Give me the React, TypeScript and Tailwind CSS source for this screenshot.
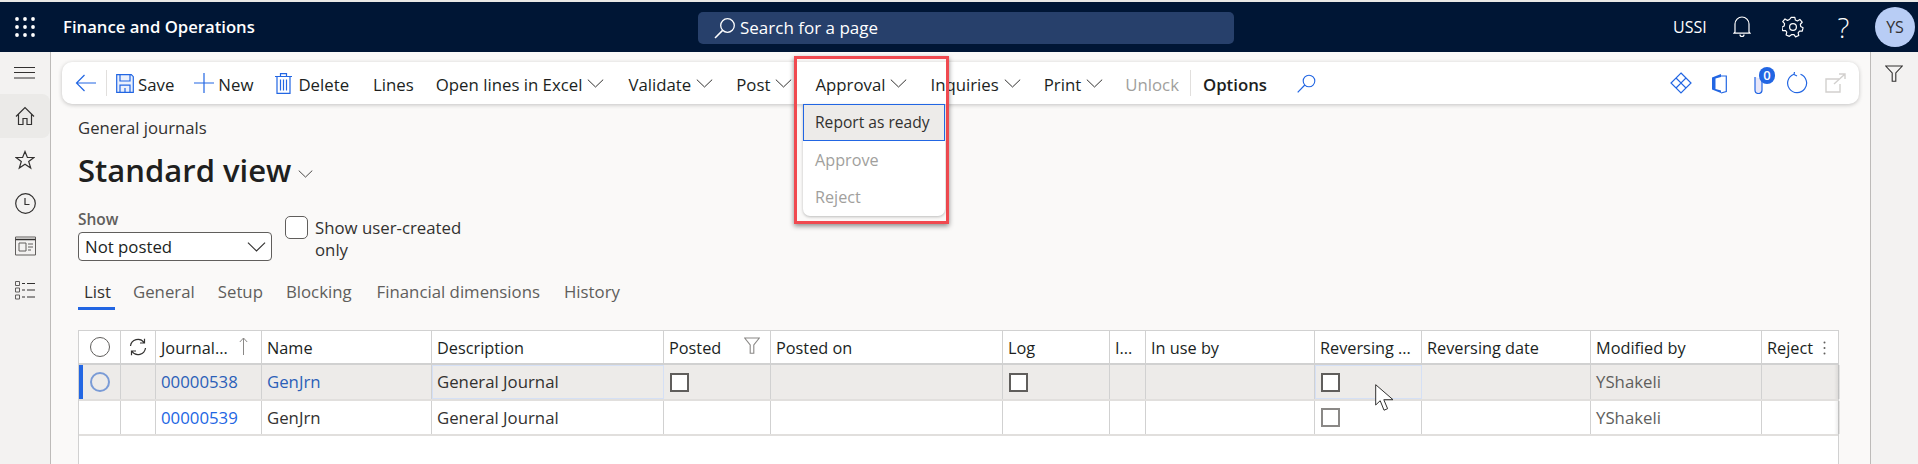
import React from "react";

const BLUE = "#2266e3";
const font = { fontFamily: '"Open Sans", "Noto Sans", sans-serif' };

const Chevron = ({ className = "ml-[5px] w-[17px] h-[9px] -mt-[2px]", color = "#323130" }: { className?: string; color?: string }) => (
  <svg viewBox="0 0 17 9" className={className} fill="none" stroke={color} strokeWidth="1">
    <path d="M.8.6 8.5 8 16.2.6" />
  </svg>
);

const ToolItem = ({ label, ml, chevron, className = "text-[#201f1e]" }: { label: string; ml: string; chevron?: boolean; className?: string }) => (
  <div className={`flex items-center shrink-0 pt-[3px] ${ml} ${className}`}>
    <span className="whitespace-nowrap">{label}</span>
    {chevron && <Chevron />}
  </div>
);

const Icon = ({ children, w, h, cls, vb }: { children: React.ReactNode; w: number; h: number; cls: string; vb?: string }) => (
  <svg width={w} height={h} viewBox={vb ?? `0 0 ${w} ${h}`} fill="none" className={cls}>
    {children}
  </svg>
);

const Check = ({ dim }: { dim?: boolean }) => (
  <div className={`ml-[1px] w-[19px] h-[19px] border-2 bg-white ${dim ? "border-[#8a8886]" : "border-[#605e5c]"}`} />
);

const headers = ["", "", "Journal...", "Name", "Description", "Posted", "Posted on", "Log", "I...", "In use by", "Reversing ...", "Reversing date", "Modified by", "Reject"];
const GRID = "grid grid-cols-[42px_35px_106px_170px_232px_107px_232px_107px_36px_169px_107px_169px_171px_78px]";

const Cell = ({ children, className = "" }: { children?: React.ReactNode; className?: string }) => (
  <div className={`relative flex items-center pl-[5px] border-r border-[#d1d1d1] last:border-r-0 whitespace-nowrap overflow-hidden ${className}`}>{children}</div>
);

const Row = ({ selected, link2, dim }: { selected?: boolean; link2?: boolean; dim?: boolean }) => (
  <div className={`${GRID} border-b-2 border-[#e1dfdd] ${selected ? "h-[36px] bg-[#edebe9]" : "h-[35px] bg-white"}`}>
    <Cell className="justify-center !pl-0">
      {selected && <div className="absolute left-0 top-0 bottom-0 w-[4px] bg-[#2266e3]" />}
      {selected && <div className="w-[20px] h-[20px] rounded-full border-2 border-[#7a9bd6]" />}
    </Cell>
    <Cell />
    <Cell className={selected ? "text-[#2b5fb8]" : "text-[#2266e3]"}>{selected ? "00000538" : "00000539"}</Cell>
    <Cell className={link2 ? "text-[#2b5fb8]" : "text-[#323130]"}>GenJrn</Cell>
    <Cell className={`text-[#323130] ${selected ? "outline outline-1 -outline-offset-1 outline-[#d5e0f5]" : ""}`}>General Journal</Cell>
    <Cell>{selected && <Check />}</Cell>
    <Cell />
    <Cell>{selected && <Check />}</Cell>
    <Cell />
    <Cell />
    <Cell className={selected ? "outline outline-1 -outline-offset-1 outline-[#d5e0f5]" : ""}><Check dim={dim} /></Cell>
    <Cell />
    <Cell className="text-[#605e5c]">YShakeli</Cell>
    <Cell>
      <div className="absolute right-0 top-0 bottom-0 w-[6px] bg-gradient-to-l from-black/10 to-transparent" />
    </Cell>
  </div>
);

export default function App() {
  return (
    <div className="w-[1918px] h-[464px] overflow-hidden relative flex flex-col bg-[#faf9f8] text-[16.8px] text-[#201f1e]" style={font}>
      <div className="h-[2px] bg-[#e8e8e6] shrink-0" />
      {/* Header */}
      <header className="h-[50px] shrink-0 bg-[#001635] flex items-center text-white">
        <Icon w={20} h={20} cls="ml-[15px] shrink-0">
          {[2, 10, 18].flatMap((y) => [2, 10, 18].map((x) => <circle key={`${x}${y}`} cx={x} cy={y} r="1.9" fill="#fff" />))}
        </Icon>
        <span className="ml-[28px] w-[192px] font-semibold text-[16.7px] whitespace-nowrap">Finance and Operations</span>
        <div className="ml-[443px] w-[536px] h-[32px] bg-[#27406b] rounded-[5px] mt-[2px] flex items-center">
          <Icon w={22} h={22} cls="ml-[16px] shrink-0">
            <circle cx="13.5" cy="8.5" r="6.8" stroke="#fff" strokeWidth="1.3" />
            <path d="M8.6 13.4 1 21" stroke="#fff" strokeWidth="1.5" />
          </Icon>
          <span className="ml-[4px] text-[#fff] text-[17px]">Search for a page</span>
        </div>
        <span className="ml-[439px] text-[16px] w-[35px]">USSI</span>
        <Icon w={18} h={22} cls="ml-[25px]">
          <path d="M2 16V8a7 7 0 0 1 14 0v8l1 1.2H1L2 16ZM7 18.5a2 2 0 0 0 4 0" stroke="#fff" strokeWidth="1.2" />
        </Icon>
        <Icon w={22} h={22} cls="ml-[31px]" vb="0 0 24 24">
          <path d="M10 2h4l.6 3 2.2 1 2.7-1.6 2.5 3-2 2.2.4 2.4 2.6 1.4-.9 3.7-3-.1-1.5 1.9.7 3-3.5 1.5-1.7-2.5h-2.4L8 22.8l-3.5-1.5.7-3-1.5-1.9-3 .1-.9-3.7L2.4 11.4l.4-2.4-2-2.2 2.5-3L6 5.4l2.2-1z" transform="translate(0 -.6)" stroke="#fff" strokeWidth="1.3" strokeLinejoin="round" />
          <circle cx="12" cy="12" r="3.7" stroke="#fff" strokeWidth="1.3" />
        </Icon>
        <span className="ml-[32px] text-[28px] font-light leading-none w-[15px] text-center">?</span>
        <div className="ml-[24px] w-[40px] h-[40px] rounded-full bg-[#b8cdf5] text-[#323130] text-[16px] flex items-center justify-center">YS</div>
      </header>

      <div className="flex flex-1 min-h-0">
        {/* Left nav */}
        <nav className="w-[51px] shrink-0 bg-[#f3f2f1] border-r border-[#bdbbb9] flex flex-col">
          <Icon w={22} h={12} cls="ml-[14px] mt-[15px] shrink-0">
            <path d="M0 .5h21M0 5.5h21M0 11h21" stroke="#323130" />
          </Icon>
          <div className="mt-[15px] h-[44px] bg-[#ebeae8] rounded-r-[8px] flex items-center justify-center">
            <Icon w={20} h={20} cls="">
              <path d="M1 10.5 10 1.5l9 9M3.5 8.5V18.5h4.500v-6h4v6h4.500V8.500" stroke="#323130" strokeWidth="1.2" />
            </Icon>
          </div>
          <div className="mt-[12px] flex justify-center">
            <Icon w={20} h={20} cls="">
              <path d="m10 1.5 2.4 6H19l-5.300 4 2 6.500L10 14.200 4.300 18l2-6.500-5.300-4h6.600z" stroke="#323130" strokeWidth="1.2" />
            </Icon>
          </div>
          <div className="mt-[23px] flex justify-center">
            <Icon w={21} h={21} cls="">
              <circle cx="10.5" cy="10.5" r="9.8" stroke="#323130" strokeWidth="1.2" />
              <path d="M10 5v6.500h4.500" stroke="#323130" strokeWidth="1.2" />
            </Icon>
          </div>
          <div className="mt-[22px] flex justify-center">
            <Icon w={21} h={20} cls="">
              <path d="M.5 1h20v18H.5z" stroke="#605e5c" />
              <path d="M.5 3.500h20" stroke="#323130" strokeWidth="1.5" />
              <path d="M4 7h7v8H4z" stroke="#605e5c" />
              <path d="M13 8h5M13 11h5M13 14h3" stroke="#605e5c" />
            </Icon>
          </div>
          <div className="mt-[24px] flex justify-center">
            <Icon w={21} h={20} cls="">
              <path d="M.5 1.500h4v4h-4zM.5 8h4v4h-4zM.5 15h4v4h-4z" stroke="#605e5c" />
              <path d="M7 3.500h3M12 3.500h8M7 10h3M12 10h8M7 17h3M12 17h8" stroke="#323130" />
            </Icon>
          </div>
        </nav>

        {/* Main */}
        <main className="flex-1 min-w-0 flex flex-col">
          <div className="ml-[11px] mt-[10px] w-[1797px] h-[42px] shrink-0 bg-white rounded-[10px] shadow-[0_1px_4px_rgba(0,0,0,0.22)] flex items-center">
            <Icon w={21} h={18} cls="ml-[13px] shrink-0">
              <path d="M9.500 1 1.500 9l8 8M1.500 9H21" stroke={BLUE} strokeWidth="1.2" />
            </Icon>
            <div className="ml-[10px] w-px h-[26px] bg-[#e1dfdd] shrink-0" />
            <Icon w={18} h={19} cls="ml-[9px] shrink-0">
              <path d="M.7.7h14.600l2 2v15.600H.7z" stroke={BLUE} strokeWidth="1.2" fill="#eaf0fc" />
              <path d="M4 1v6h10V1M4 18.200v-7h10v7M9 14v4" stroke={BLUE} strokeWidth="1.2" />
            </Icon>
            <ToolItem label="Save" ml="ml-[4px]" />
            <Icon w={20} h={20} cls="ml-[20px] shrink-0">
              <path d="M10 0v20M0 10h20" stroke={BLUE} strokeWidth="1.2" />
            </Icon>
            <ToolItem label="New" ml="ml-[4px]" />
            <Icon w={17} h={21} cls="ml-[22px] shrink-0">
              <path d="M0 3.500h17M5.500 3V.7h6V3M2 3.500V20.300h13V3.500M5.500 6.500v11M8.500 6.500v11M11.500 6.500v11" stroke={BLUE} strokeWidth="1.2" />
            </Icon>
            <ToolItem label="Delete" ml="ml-[6px]" />
            <ToolItem label="Lines" ml="ml-[24px]" />
            <ToolItem label="Open lines in Excel" ml="ml-[22px]" chevron />
            <ToolItem label="Validate" ml="ml-[24px]" chevron />
            <ToolItem label="Post" ml="ml-[23px]" chevron />
            <ToolItem label="Approval" ml="ml-[23px]" chevron />
            <ToolItem label="Inquiries" ml="ml-[23px]" chevron />
            <ToolItem label="Print" ml="ml-[23px]" chevron />
            <ToolItem label="Unlock" ml="ml-[22px]" className="text-[#a19f9d]" />
            <div className="ml-[11px] w-px h-[26px] bg-[#e1dfdd] shrink-0" />
            <ToolItem label="Options" ml="ml-[12px]" className="font-semibold text-[#201f1e]" />
            <Icon w={19} h={19} cls="ml-[30px] shrink-0">
              <circle cx="12" cy="7" r="5.8" stroke={BLUE} strokeWidth="1.1" />
              <path d="M7.800 11 .7 18.300" stroke={BLUE} strokeWidth="1.2" />
            </Icon>
            <div className="flex-1" />
            <Icon w={22} h={22} cls="shrink-0">
              <path d="M11 1 21 11 11 21 1 11z" stroke={BLUE} strokeWidth="1.2" />
              <path d="M6 6l5 5 5-5M6 16l5-5 5 5" stroke={BLUE} strokeWidth="1.2" />
            </Icon>
            <Icon w={16} h={21} cls="ml-[19px] shrink-0">
              <path d="M1 4.500 10 1v19L1 16.500z" fill={BLUE} />
              <path d="M10 3h5.300v15.500L10 20" stroke={BLUE} strokeWidth="1.2" />
              <path d="M4.500 5.500v10.500L10 17.500V4z" fill="#fff" />
            </Icon>
            <div className="relative ml-[27px] w-[21px] h-[21px] shrink-0">
              <Icon w={9} h={21} cls="">
                <path d="M1 4v13a3.500 3.500 0 0 0 7 0V6" stroke={BLUE} strokeWidth="1.2" fill="#e8e6f8" />
              </Icon>
              <div className="absolute left-[5px] top-[-6px] w-[16px] h-[17px] rounded-full bg-[#2266e3] text-white text-[13px] font-semibold leading-[17px] text-center">0</div>
            </div>
            <Icon w={22} h={22} cls="ml-[11px] shrink-0">
              <path d="M14.500 2.300A9.500 9.500 0 1 1 8 2.200M8.500 0l-.5 2.500 3 1.500" stroke={BLUE} strokeWidth="1.2" />
            </Icon>
            <Icon w={21} h={20} cls="ml-[17px] mr-[13px] shrink-0">
              <path d="M14 6H1v13h14V11" stroke="#d2d0ce" strokeWidth="1.4" />
              <path d="M9 11 20 1M14 1h6v5" stroke="#d2d0ce" strokeWidth="1.4" />
            </Icon>
          </div>

          <div className="ml-[27px] mt-[14px] leading-[20px] text-[16.7px] text-[#323130]">General journals</div>
          <div className="ml-[27px] mt-[12px] flex items-center h-[40px]">
            <span className="text-[31px] font-semibold leading-[40px] text-[#201f1e]">Standard view</span>
            <Chevron className="ml-[7px] mt-[7px] w-[15px] h-[8px]" />
          </div>

          <div className="ml-[27px] mt-[19px] flex items-start shrink-0">
            <div className="w-[194px] shrink-0">
              <div className="h-[20px] leading-[20px] font-semibold text-[#605e5c] text-[15.5px]">Show</div>
              <div className="mt-[3px] h-[29px] rounded-[4px] bg-white border border-[#605e5c] flex items-center justify-between pl-[6px] pr-[5px]">
                <span>Not posted</span>
                <Chevron className="w-[19px] h-[10px]" color="#323130" />
              </div>
            </div>
            <div className="ml-[13px] mt-[7px] w-[23px] h-[23px] rounded-[5px] border border-[#605e5c] bg-white shrink-0" />
            <div className="ml-[7px] mt-[8px] leading-[22px] w-[160px] text-[#323130]">Show user-created only</div>
          </div>

          <div className="ml-[27px] mt-[18px] h-[31px] flex shrink-0 text-[#605e5c]">
            <div className="w-[37px] px-[6px] border-b-[3px] border-[#2266e3] text-[#323130]">List</div>
            <div className="ml-[18px]">General</div>
            <div className="ml-[23px]">Setup</div>
            <div className="ml-[23px]">Blocking</div>
            <div className="ml-[25px]">Financial dimensions</div>
            <div className="ml-[24px]">History</div>
          </div>

          {/* Grid */}
          <div className="ml-[27px] mt-[20px] mr-[31px] flex-1 bg-white border-x border-t border-[#d1d1d1] flex flex-col">
            <div className={`${GRID} h-[34px] border-b-2 border-[#d1d1d1] font-medium text-[16.3px] text-[#201f1e]`}>
              {headers.map((h, i) => (
                <Cell key={i} className={i < 2 ? "justify-center !pl-0" : "pt-[2px]"}>
                  {i === 0 && <div className="w-[20px] h-[20px] rounded-full border border-[#605e5c]" />}
                  {i === 1 && (
                    <Icon w={18} h={18} cls="">
                      <path d="M1.500 8A7.500 7.500 0 0 1 15 4.500M16.500 10A7.500 7.500 0 0 1 3 13.500M15.500 .8V5H11M2.500 17.200V13H7" stroke="#323130" strokeWidth="1.2" />
                    </Icon>
                  )}
                  {h}
                  {i === 2 && (
                    <Icon w={9} h={18} cls="absolute right-[13px] top-[6px]">
                      <path d="M4.500 18V1M.8 5l3.700-4 3.700 4" stroke="#8a8886" />
                    </Icon>
                  )}
                  {i === 5 && (
                    <Icon w={16} h={17} cls="absolute right-[10px] top-[6px]">
                      <path d="M.7 1h14.600L9.800 8v8.300H6.200V8z" stroke="#8a8886" strokeWidth="1.1" />
                    </Icon>
                  )}
                  {i === 13 && (
                    <Icon w={3} h={14} cls="absolute right-[14px] top-[10px]">
                      <circle cx="1.5" cy="1.5" r="1" fill="#605e5c" />
                      <circle cx="1.5" cy="7" r="1" fill="#605e5c" />
                      <circle cx="1.5" cy="12.5" r="1" fill="#605e5c" />
                    </Icon>
                  )}
                </Cell>
              ))}
            </div>
            <Row selected link2 />
            <Row dim />
          </div>
        </main>

        {/* Right pane */}
        <aside className="w-[48px] shrink-0 bg-[#f3f2f1] border-l border-[#bdbbb9] flex justify-center">
          <Icon w={18} h={17} cls="mt-[13px] mr-[1px]">
            <path d="M.7 1h16.600L10.800 8v8.300H7.200V8z" stroke="#323130" strokeWidth="1.1" />
          </Icon>
        </aside>
      </div>

      {/* Annotation + open menu */}
      <div className="absolute left-[794px] top-[56px] w-[155px] h-[168px] border-[3px] border-[#f04a50] shadow-[0_2px_5px_rgba(0,0,0,0.45)]" />
      <div className="absolute left-[803px] top-[104px] w-[142px] h-[112px] bg-white rounded-b-[7px] shadow-[0_1px_3px_rgba(0,0,0,0.25)] text-[16.2px]">
        <div className="h-[37px] pt-[1px] bg-[#edebe9] border border-[#2266e3] pl-[11px] flex items-center text-[#323130] text-[15.6px]">Report as ready</div>
        <div className="h-[37px] pt-[2px] pl-[12px] flex items-center text-[#a19f9d]">Approve</div>
        <div className="h-[37px] pt-[2px] pl-[12px] flex items-center text-[#a19f9d]">Reject</div>
      </div>
      <svg width="19" height="28" viewBox="0 0 19 28" className="absolute left-[1375px] top-[384px]" fill="#fff" stroke="#323130" strokeWidth="1">
        <path d="M.7.7V21l4.500-4.300 3.800 9.500 3.600-1.500-3.800-9H18z" />
      </svg>
    </div>
  );
}
